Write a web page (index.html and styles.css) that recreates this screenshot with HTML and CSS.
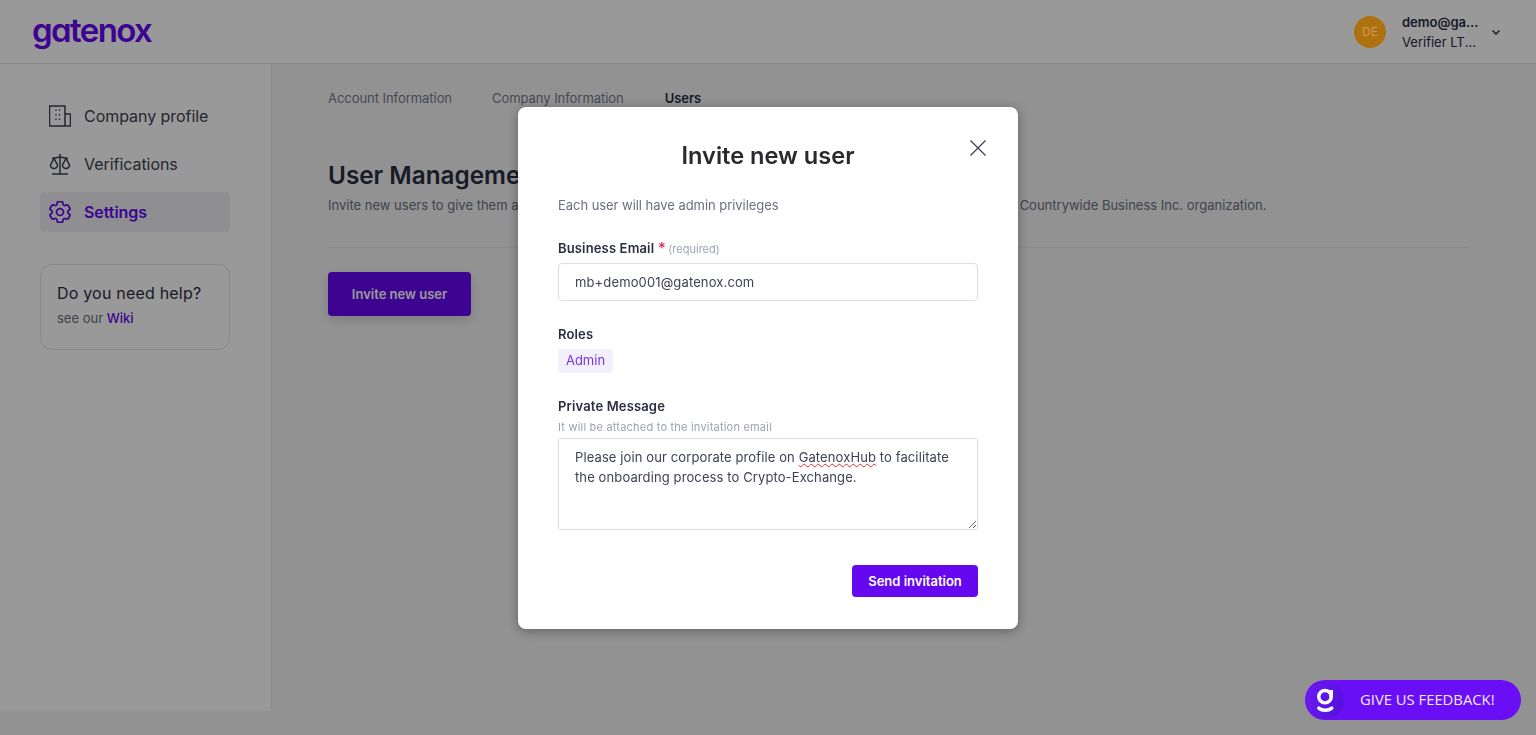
FILE: index.html
```html
<!DOCTYPE html>
<html lang="en">
<head>
    <meta charset="UTF-8">
    <meta name="viewport" content="width=device-width, initial-scale=1.0">
    <title>Gatenox - Users</title>
    <link rel="stylesheet" href="styles.css">
</head>
<body>
<header class="topbar">
    <div class="logo">gatenox</div>
    <div class="user-menu">
        <div class="avatar">DE</div>
        <div class="user-info">
            <div class="user-mail">demo@gatenox.com</div>
            <div class="user-company">Verifier LTD Company</div>
        </div>
        <svg class="chevron" viewBox="0 0 12 12" width="12" height="12"><path d="M2.5 4.5 6 8l3.5-3.5" fill="none" stroke="currentColor" stroke-width="1.5"/></svg>
    </div>
</header>
<div class="layout">
    <aside class="sidebar">
        <nav class="side-nav">
            <a class="side-item">
                <svg class="side-icon" viewBox="1 1 22 22"><path d="M1.500 2h15.500v20H1.500zM17 10h5.500v12H17"/><path class="dots" d="M8 5.500V7M11.500 5.500V7M8 10v1.500M11.500 10v1.500M8 14.500V16M11.500 14.500V16"/></svg>
                <span>Company profile</span>
            </a>
            <a class="side-item">
                <svg class="side-icon" viewBox="1 1 22 22"><path d="M12 2v20M4 22h16M4 6.500 12 5l8 1.500M6 6.500 2.500 13a3.500 3.500 0 0 0 7 0zM18 6.500 14.500 13a3.500 3.500 0 0 0 7 0z"/></svg>
                <span>Verifications</span>
            </a>
            <a class="side-item active">
                <svg class="side-icon" viewBox="2.500 2.500 19 19"><path d="M9.594 3.94c.09-.542.56-.94 1.11-.94h2.593c.55 0 1.02.398 1.11.94l.213 1.281c.063.374.313.686.645.87.074.04.147.083.22.127.325.196.72.257 1.075.124l1.217-.456a1.125 1.125 0 0 1 1.37.49l1.296 2.247a1.125 1.125 0 0 1-.26 1.431l-1.003.827c-.293.241-.438.613-.43.992a7.723 7.723 0 0 1 0 .255c-.008.378.137.75.43.991l1.004.827c.424.35.534.955.26 1.43l-1.298 2.247a1.125 1.125 0 0 1-1.369.491l-1.217-.456c-.355-.133-.75-.072-1.076.124a6.47 6.47 0 0 1-.22.128c-.331.183-.581.495-.644.869l-.213 1.281c-.09.543-.56.94-1.11.94h-2.594c-.55 0-1.019-.398-1.11-.94l-.213-1.281c-.062-.374-.312-.686-.644-.87a6.52 6.52 0 0 1-.22-.127c-.325-.196-.72-.257-1.076-.124l-1.217.456a1.125 1.125 0 0 1-1.369-.49l-1.297-2.247a1.125 1.125 0 0 1 .26-1.431l1.004-.827c.292-.24.437-.613.43-.991a6.932 6.932 0 0 1 0-.255c.007-.38-.138-.751-.43-.992l-1.004-.827a1.125 1.125 0 0 1-.26-1.43l1.297-2.247a1.125 1.125 0 0 1 1.37-.491l1.216.456c.356.133.751.072 1.076-.124.072-.044.146-.086.22-.128.332-.183.582-.495.644-.869l.214-1.28Z"/><path d="M15 12a3 3 0 1 1-6 0 3 3 0 0 1 6 0Z"/></svg>
                <span>Settings</span>
            </a>
        </nav>
        <div class="help-card">
            <div class="help-title">Do you need help?</div>
            <div class="help-text">see our <a class="help-link">Wiki</a></div>
        </div>
    </aside>
    <main class="content">
        <div class="tabs">
            <a class="tab">Account Information</a>
            <a class="tab">Company Information</a>
            <a class="tab current">Users</a>
        </div>
        <h1 class="page-title">User Management</h1>
        <p class="page-sub">Invite new users to give them access to your corporate profile and data and to allow them to act on behalf of the Countrywide Business Inc. organization.</p>
        <button class="invite-btn">Invite new user</button>
    </main>
</div>

<div class="overlay">
    <div class="modal">
        <svg class="modal-close" viewBox="0 0 16 16" width="16" height="16"><path d="M.5.500l15 15M15.500.500l-15 15" fill="none" stroke="currentColor" stroke-width="1.200"/></svg>
        <h2 class="modal-title">Invite new user</h2>
        <p class="modal-desc">Each user will have admin privileges</p>

        <div class="field-label email-label">Business Email <span class="req">*</span> <span class="req-note">(required)</span></div>
        <div class="text-input">mb+demo001@gatenox.com</div>

        <div class="field-label roles-label">Roles</div>
        <span class="chip">Admin</span>

        <div class="field-label msg-label">Private Message</div>
        <div class="field-hint">It will be attached to the invitation email</div>
        <div class="text-area">Please join our corporate profile on <span class="misspelled">GatenoxHub</span> to facilitate the onboarding process to Crypto-Exchange.</div>

        <div class="modal-actions">
            <button class="send-btn">Send invitation</button>
        </div>
    </div>
</div>

<a class="feedback">
    <span class="feedback-badge">
        <svg viewBox="0 0 24 28" width="24" height="28"><circle cx="11.500" cy="10" r="6.500" fill="none" stroke="#fff" stroke-width="3.600"/><path d="M18 3v8" stroke="#fff" stroke-width="3.600" fill="none"/><path d="M5 22c3.500 3 10 3 13.500 0" stroke="#fff" stroke-width="3.600" stroke-linecap="round" fill="none"/></svg>
    </span>
    <span class="feedback-text">GIVE US FEEDBACK!</span>
</a>
</body>
</html>
```

FILE: styles.css
```css
* {
    box-sizing: border-box;
}
body {
    margin: 0;
    height: 735px;
    overflow: hidden;
    font-family: Inter, "Liberation Sans", sans-serif;
    font-size: 13px;
    color: #2b2d42;
    background-color: #f4f4f6;
}
.topbar {
    display: flex;
    align-items: center;
    justify-content: space-between;
    height: 64px;
    padding: 0 34px 0 32px;
    background-color: #fff;
    border-bottom: 1px solid #e8e8e8;
}
.logo {
    margin-top: -4px;
    font-size: 33px;
    font-weight: 600;
    letter-spacing: -1.6px;
    line-height: 40px;
    color: #6508f0;
    font-feature-settings: "cv11";
}
.user-menu {
    display: flex;
    align-items: center;
}
.avatar {
    position: relative;
    z-index: 11;
    width: 32px;
    height: 32px;
    border-radius: 50%;
    margin-right: 16px;
    background-color: #ae7210;
    color: #d09a4c;
    font-size: 12px;
    line-height: 32px;
    text-align: center;
}
.user-info {
    width: 79px;
    line-height: 20px;
}
.user-mail, .user-company {
    white-space: nowrap;
    overflow: hidden;
    text-overflow: ellipsis;
}
.user-mail {
    font-weight: 600;
}
.chevron {
    margin-left: 9px;
    color: #2b2d42;
}
.layout {
    display: flex;
    height: 647px;
}
.sidebar {
    flex: 0 0 272px;
    padding: 32px 41px 0 40px;
    background-color: #fff;
    border-right: 1px solid #e8e8e8;
}
.side-nav {
    display: flex;
    flex-direction: column;
    gap: 8px;
}
.side-item {
    display: flex;
    align-items: center;
    gap: 13px;
    height: 40px;
    padding-left: 9px;
    border-radius: 4px;
    font-size: 16px;
    letter-spacing: -0.05px;
    color: #3e414e;
}
.side-icon {
    width: 22px;
    height: 22px;
    fill: none;
    stroke: currentColor;
    stroke-width: 1.500;
}
.side-icon .dots {
    stroke-width: 1.300;
}
.side-item.active {
    background-color: #eeeff2;
    color: #6508f0;
    font-weight: 600;
}
.help-card {
    height: 86px;
    margin-top: 32px;
    padding: 18px 16px;
    border: 1px solid #e5e5e8;
    border-radius: 12px;
}
.help-title {
    font-size: 16px;
    line-height: 20px;
    letter-spacing: 0.2px;
}
.help-text {
    margin-top: 6px;
    color: #6b7080;
    line-height: 18px;
}
.help-link {
    color: #6508f0;
    font-weight: 500;
}
.content {
    flex: 1;
    padding: 26px 68px 0 56px;
}
.tabs {
    display: flex;
    gap: 40px;
    line-height: 16px;
    letter-spacing: -0.05px;
}
.tab {
    color: #777b8c;
}
.tab.current {
    margin-left: 1px;
    color: #2b2d42;
    font-weight: 600;
}
.page-title {
    margin: 53px 0 0;
    font-size: 24.3px;
    line-height: 32px;
    font-weight: 600;
}
.page-sub {
    margin: 4px 0 0;
    padding-bottom: 32px;
    line-height: 20px;
    color: #6b7080;
    white-space: nowrap;
    border-bottom: 1px solid #e8e8ea;
}
.invite-btn {
    display: block;
    width: 143px;
    height: 44px;
    margin-top: 24px;
    border: none;
    border-radius: 4px;
    background-color: #6508f0;
    color: #fff;
    font: 600 13px Inter, sans-serif;
    box-shadow: 0 4px 12px rgba(0, 0, 0, 0.15);
}
.overlay {
    position: fixed;
    inset: 0;
    z-index: 10;
    display: flex;
    align-items: center;
    justify-content: center;
    background-color: rgba(0, 0, 0, 0.4);
}
.modal {
    position: relative;
    width: 500px;
    height: 522px;
    padding: 33px 40px 32px;
    background-color: #fff;
    border-radius: 8px;
    box-shadow: 0 2px 12px rgba(0, 0, 0, 0.35);
}
.modal-close {
    position: absolute;
    top: 33px;
    right: 32px;
    color: #3b3e4e;
}
.modal-title {
    margin: 0;
    font-size: 23.6px;
    line-height: 32px;
    font-weight: 600;
    text-align: center;
    color: #29292e;
}
.modal-desc {
    margin: 23px 0 0;
    line-height: 20px;
    color: #6b7080;
    letter-spacing: -0.05px;
}
.field-label {
    font-weight: 600;
    line-height: 16px;
    letter-spacing: 0.15px;
}
.email-label {
    margin-top: 25px;
}
.req {
    color: #e0314b;
    font-size: 15px;
}
.req-note {
    margin-left: -1px;
    font-size: 11px;
    font-weight: 400;
    letter-spacing: 0;
    color: #9da1b5;
}
.text-input {
    height: 38px;
    margin-top: 6px;
    padding: 0 16px;
    line-height: 36px;
    letter-spacing: 0.13px;
    border: 1px solid #dcdde3;
    border-radius: 4px;
    color: #3f4254;
}
.roles-label {
    margin-top: 25px;
}
.chip {
    display: block;
    width: 55px;
    height: 24px;
    margin-top: 7px;
    line-height: 23px;
    text-align: center;
    background-color: #f3effc;
    border-radius: 4px;
    color: #7a35e8;
}
.msg-label {
    margin-top: 25px;
}
.field-hint {
    margin-top: 6px;
    font-size: 11px;
    line-height: 14px;
    letter-spacing: 0.21px;
    color: #9da1b5;
}
.text-area {
    height: 92px;
    margin-top: 4px;
    padding: 8px 16px;
    line-height: 20px;
    letter-spacing: 0.11px;
    border: 1px solid #dcdde3;
    border-radius: 4px;
    color: #3f4254;
    overflow: auto;
    resize: both;
}
.misspelled {
    text-decoration: underline wavy #e02b2b 1px;
    text-underline-offset: 1px;
}
.modal-actions {
    display: flex;
    justify-content: flex-end;
    margin-top: 35px;
}
.send-btn {
    width: 126px;
    height: 32px;
    border: none;
    border-radius: 4px;
    background-color: #6508f0;
    color: #fff;
    font: 600 13px Inter, sans-serif;
}
.feedback {
    position: fixed;
    right: 15px;
    bottom: 15px;
    z-index: 20;
    display: flex;
    align-items: center;
    width: 216px;
    height: 40px;
    border-radius: 20px;
    background-color: #6a0ff5;
}
.feedback-badge {
    display: flex;
    align-items: center;
    justify-content: center;
    width: 38px;
    height: 38px;
    margin-left: 1px;
    border-radius: 50%;
    background: linear-gradient(110deg, #6c1af5, #5410d8);
}
.feedback-badge svg {
    width: 23px;
    height: 27px;
}
.feedback-text {
    margin-top: -2px;
    margin-left: 16px;
    font-family: "Open Sans", sans-serif;
    font-size: 14.8px;
    color: #f1e8ff;
}
```
